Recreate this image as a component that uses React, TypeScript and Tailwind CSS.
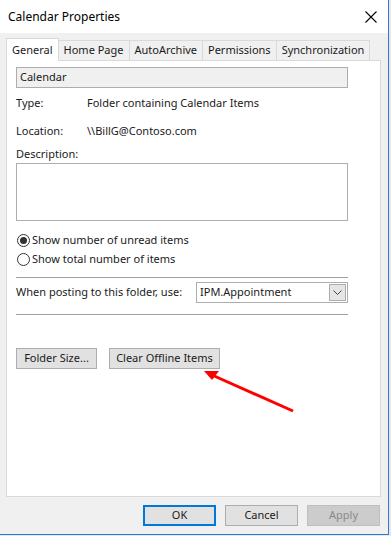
import { useState } from "react";

const tabs = ["General", "Home Page", "AutoArchive", "Permissions", "Synchronization"];

export default function App() {
  const [unread, setUnread] = useState(true);

  return (
    <div className="w-[391px] h-[536px] bg-[#e8e8e8] overflow-hidden" style={{ fontFamily: '"Noto Sans", "Open Sans", sans-serif' }}>
      <div className="relative w-[389px] h-[535px] bg-[#f0f0f0] border-r border-b border-[#2b79d0] flex flex-col text-[11px] text-[#1a1a1a] whitespace-nowrap">

        {/* title bar */}
        <div className="h-[33px] shrink-0 bg-white flex items-center justify-between pl-[8px] pr-[10px]">
          <span className="text-[12px] text-black">Calendar Properties</span>
          <svg width="14" height="14" viewBox="0 0 14 14" className="stroke-black" strokeWidth="1.1">
            <path d="M1.5 1.5 L12.5 12.5 M12.5 1.5 L1.5 12.5" />
          </svg>
        </div>

        {/* tabs */}
        <div className="flex items-end pl-[6px] h-[27px] shrink-0">
          <div className="h-[23px] px-[5px] bg-white border border-b-0 border-[#d9d9d9] flex items-center relative top-[1px] z-10">General</div>
          {tabs.slice(1).map((t) => (
            <div key={t} className="h-[20px] px-[5px] bg-[#f0f0f0] border border-l-0 border-b-0 border-[#d9d9d9] flex items-center">
              {t}
            </div>
          ))}
        </div>

        {/* panel */}
        <div className="mx-[6px] w-[375px] h-[437px] shrink-0 bg-white border border-[#d9d9d9] px-[9px] pt-[6px] flex flex-col">
          <div className="w-[332px] h-[21px] bg-[#f0f0f0] border border-[#adadad] flex items-center px-[3px]">Calendar</div>

          <div className="flex mt-[5px] h-[20px] items-center">
            <span className="w-[71px]">Type:</span>
            <span>Folder containing Calendar Items</span>
          </div>
          <div className="flex mt-[8px] h-[20px] items-center">
            <span className="w-[71px]">Location:</span>
            <span>\\BillG@Contoso.com</span>
          </div>
          <div className="mt-[4px] h-[18px] flex items-center">Description:</div>
          <div className="w-[332px] h-[58px] border border-[#adadad]" />

          <label className="flex items-center gap-[2px] mt-[10px] h-[18px]" onClick={() => setUnread(true)}>
            <span className="w-[13px] h-[13px] rounded-full border border-[#333] flex items-center justify-center ml-[1px]">
              {unread && <span className="w-[7px] h-[7px] rounded-full bg-[#333]" />}
            </span>
            Show number of unread items
          </label>
          <label className="flex items-center gap-[2px] mt-[1px] h-[18px]" onClick={() => setUnread(false)}>
            <span className="w-[13px] h-[13px] rounded-full border border-[#333] flex items-center justify-center ml-[1px]">
              {!unread && <span className="w-[7px] h-[7px] rounded-full bg-[#333]" />}
            </span>
            Show total number of items
          </label>

          <div className="w-[332px] border-t border-[#a0a0a0] mt-[9px]" />
          <div className="flex items-center mt-[4px] h-[21px]">
            <span className="w-[180px]">When posting to this folder, use:</span>
            <div className="w-[152px] h-[21px] border border-[#adadad] flex items-center justify-between pl-[3px] pr-[1px]">
              <span>IPM.Appointment</span>
              <span className="w-[17px] h-[17px] bg-[#e5e5e5] border border-[#adadad] flex items-center justify-center">
                <svg width="9" height="5" viewBox="0 0 9 5" fill="none" stroke="#444" strokeWidth="1">
                  <path d="M0.5 0.5 L4.5 4.5 L8.5 0.5" />
                </svg>
              </span>
            </div>
          </div>
          <div className="w-[332px] border-t border-[#a0a0a0] mt-[11px]" />

          <div className="flex gap-[12px] mt-[33px]">
            <button className="w-[81px] h-[21px] bg-[#e1e1e1] border border-[#adadad] text-[11px]">Folder Size...</button>
            <button className="w-[111px] h-[21px] bg-[#e1e1e1] border border-[#adadad] text-[11px]">Clear Offline Items</button>
          </div>
        </div>

        {/* bottom buttons */}
        <div className="flex justify-end gap-[9px] pr-[8px] mt-[8px]">
          <button className="w-[73px] h-[21px] bg-[#e1e1e1] border-2 border-[#0078d7] text-[11px]">OK</button>
          <button className="w-[73px] h-[21px] bg-[#e1e1e1] border border-[#adadad] text-[11px]">Cancel</button>
          <button className="w-[73px] h-[21px] bg-[#cccccc] border border-[#bfbfbf] text-[11px] text-[#8a8a8a]">Apply</button>
        </div>

        {/* red annotation arrow */}
        <svg className="absolute left-[195px] top-[362px]" width="105" height="55" viewBox="0 0 105 55">
          <path d="M98 49 L17 13" stroke="#ff0000" strokeWidth="3" fill="none" />
          <path d="M9 9 L24 9 L17 18 Z" fill="#ff0000" />
        </svg>
      </div>
    </div>
  );
}
